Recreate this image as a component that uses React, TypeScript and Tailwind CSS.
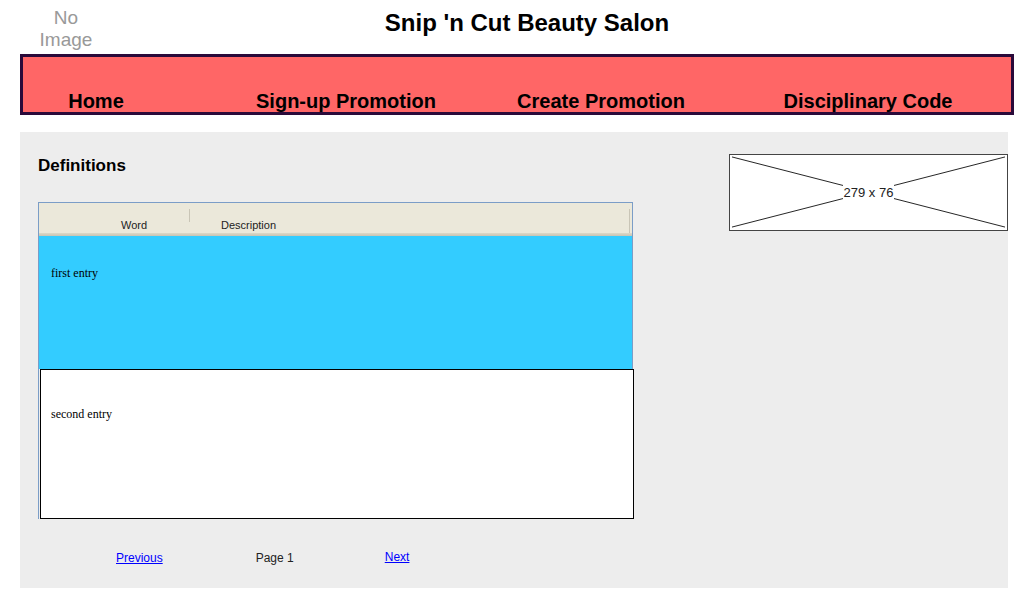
export default function App() {
  const navItems = [
    { label: "Home", gap: "ml-[3px]" },
    { label: "Sign-up Promotion", gap: "ml-[110px]" },
    { label: "Create Promotion", gap: "ml-[115px]" },
    { label: "Disciplinary Code", gap: "ml-[127px]" },
  ];

  return (
    <div className="w-[1027px] h-[600px] bg-white overflow-hidden font-['Liberation_Sans',Arial,sans-serif]">
      {/* Header */}
      <div className="flex h-[54px]">
        <div className="w-[132px] pt-[7px] text-center text-[19px] leading-[22px] text-[#999999]">
          No
          <br />
          Image
        </div>
        <div className="w-[790px] pt-[9px] text-center text-[24px] leading-[28px] font-bold text-black">
          Snip 'n Cut Beauty Salon
        </div>
      </div>

      {/* Nav */}
      <div className="mx-[20px] w-[994px] h-[61px] bg-[#ff6666] border-[3px] border-[#2a0a3a] flex items-end">
        {navItems.map((item) => (
          <div
            key={item.label}
            className={`${item.gap} w-[140px] flex justify-center whitespace-nowrap text-[20px] leading-[22px] font-bold text-black`}
          >
            {item.label}
          </div>
        ))}
      </div>

      {/* Content panel */}
      <div className="mx-[20px] mt-[17px] w-[988px] h-[456px] bg-[#ededed] flex">
        <div className="pl-[18px] pt-[23px] flex flex-col">
          <div className="text-[17px] leading-[22px] font-bold text-black">Definitions</div>

          <div className="mt-[25px] w-[595px] h-[317px] flex flex-col border-l border-t border-r border-[#7b9dc7]">
            {/* Table header */}
            <div className="h-[33px] flex flex-col bg-[#ebe8da]">
              <div className="flex-1 flex text-[11px] leading-[13px] text-[#222]">
                <div className="w-[150px] flex flex-col">
                  <div className="flex-1 flex items-end justify-center pb-[1px] pl-[40px]">Word</div>
                </div>
                <div className="w-px mt-[6px] h-[13px] bg-[#fbfbf7] border-l border-[#c9c5b6]" />
                <div className="flex-1 flex items-end pb-[1px] pl-[31px]">Description</div>
                <div className="w-px mt-[6px] mr-[2px] h-[24px] bg-[#fbfbf7] border-l border-[#c9c5b6]" />
              </div>
              <div className="h-[3px] bg-gradient-to-b from-[#dcd8c8] to-[#c8c4b3]" />
            </div>

            {/* Row 1 */}
            <div className="h-[133px] bg-[#33ccff] pl-[12px] pt-[30px] font-['Liberation_Serif','Times_New_Roman',serif] text-[12px] leading-[14px] text-black">
              first entry
            </div>

            {/* Row 2 */}
            <div className="flex-1 -mr-[2px] ml-px bg-white border border-black border-b-[1.5px] pl-[10px] pt-[37px] font-['Liberation_Serif','Times_New_Roman',serif] text-[12px] leading-[14px] text-black">
              second entry
            </div>
          </div>

          {/* Pagination */}
          <div className="mt-[32px] flex items-start text-[12px] leading-[14px]">
            <a href="#" className="ml-[78px] text-[#0000ff] underline">Previous</a>
            <span className="ml-[93px] text-[#222]">Page 1</span>
            <a href="#" className="ml-[91px] -mt-px text-[#0000ff] underline">Next</a>
          </div>
        </div>

        {/* Image placeholder */}
        <div className="ml-auto mt-[22px] relative w-[279px] h-[77px] bg-white border border-[#444] border-r-[1.5px] flex items-center justify-center">
          <svg className="absolute inset-0 w-full h-full" viewBox="0 0 279 77" preserveAspectRatio="none">
            <line x1="2" y1="2" x2="277" y2="74" stroke="#222" strokeWidth="1" />
            <line x1="277" y1="2" x2="2" y2="74" stroke="#222" strokeWidth="1" />
          </svg>
          <span className="relative bg-white px-[1px] text-[13px] leading-[15px] text-[#222]">
            279 x 76
          </span>
        </div>
      </div>
    </div>
  );
}
